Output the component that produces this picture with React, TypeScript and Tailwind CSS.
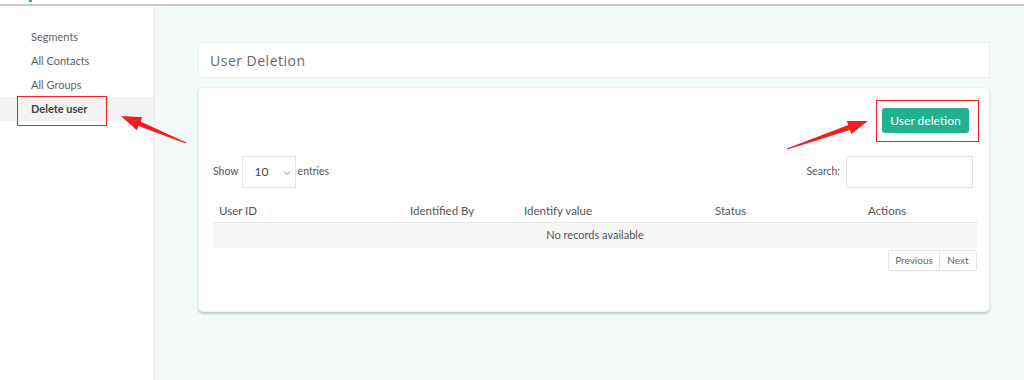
import React from 'react';

const columns = [
  { label: 'User ID', w: 'w-[191px]' },
  { label: 'Identified By', w: 'w-[114px]' },
  { label: 'Identify value', w: 'w-[191px]' },
  { label: 'Status', w: 'w-[153px]' },
  { label: 'Actions', w: 'flex-1' },
];

const sideLinks = ['Segments', 'All Contacts', 'All Groups'];

export default function App() {
  return (
    <div className="relative w-[1024px] h-[380px] overflow-hidden bg-white font-['Lato','Open_Sans',sans-serif] text-[#555]">
      {/* top bar remnant */}
      <div className="relative h-[4px] bg-white">
        <div className="absolute left-[29px] top-0 w-[3px] h-[2px] bg-[#1fb08c]" />
      </div>
      <div className="h-[2px] bg-[#c9c9c9]" />

      <div className="flex h-[374px]">
        {/* sidebar */}
        <aside className="w-[155px] shrink-0 bg-white border-r border-[#e3e8e6] pt-[19px]">
          {sideLinks.map((l) => (
            <div key={l} className="h-[24px] flex items-center pl-[31px] text-[11px] text-[#5f5f5f]">
              {l}
            </div>
          ))}
          <div className="h-[24px] flex items-center pl-[31px] text-[11px] font-bold text-[#444] bg-[#f3f3f3]">
            Delete user
          </div>
        </aside>

        {/* main */}
        <main className="flex-1 bg-[#f3f9f7] pl-[43px] pr-[34px] pt-[36px]">
          <div className="h-[36px] bg-white border border-[#ebeeed] flex items-center pl-[11px]">
            <span className="font-['Open_Sans',sans-serif] text-[14px] tracking-[0.5px] text-[#666]">User Deletion</span>
          </div>

          <div className="mt-[9px] h-[225px] bg-white rounded-[5px] shadow-[0_2px_2px_rgba(0,0,0,0.18)] border border-[#eef0ef] pt-[20px] pl-[14px] pr-[12px]">
            <div className="flex justify-end pr-[8px]">
              <button className="w-[87px] h-[25px] rounded-[3px] bg-[#20b18e] text-white text-[12px]">
                User deletion
              </button>
            </div>

            <div className="mt-[23px] flex items-center justify-between h-[32px]">
              <div className="flex items-center text-[10.5px] text-[#555]">
                <span>Show</span>
                <div className="ml-[3px] w-[54px] h-[32px] border border-[#e3e3e3] flex items-center pl-[12px] pr-[4px] justify-between">
                  <span className="text-[12px] text-[#444]">10</span>
                  <svg width="8" height="6" viewBox="0 0 8 6" className="mt-[1px]">
                    <path d="M1 1.5 L4 4.5 L7 1.5" fill="none" stroke="#888" strokeWidth="1" />
                  </svg>
                </div>
                <span className="ml-[2px]">entries</span>
              </div>
              <div className="flex items-center text-[10.5px] text-[#555] pr-[4px]">
                <span>Search:</span>
                <div className="ml-[6px] w-[127px] h-[32px] border border-[#e3e3e3]" />
              </div>
            </div>

            <div className="mt-[12px]">
              <div className="flex h-[23px] items-center border-b border-[#e6e6e6] text-[11.5px] text-[#555]">
                {columns.map((c) => (
                  <div key={c.label} className={`${c.w} pl-[6px]`}>
                    {c.label}
                  </div>
                ))}
              </div>
              <div className="h-[25px] bg-[#f5f5f5] flex items-center justify-center text-[11px] text-[#555]">
                No records available
              </div>
              <div className="mt-[2px] flex justify-end">
                <div className="flex h-[21px] border border-[#e3e3e3] rounded-[2px] text-[10px] text-[#666]">
                  <div className="w-[51px] flex items-center justify-center border-r border-[#e3e3e3]">Previous</div>
                  <div className="w-[36px] flex items-center justify-center">Next</div>
                </div>
              </div>
            </div>
          </div>
        </main>
      </div>

      {/* annotations */}
      <div className="absolute left-[17px] top-[96px] w-[90px] h-[30px] border-[1.5px] border-[#f02020]" />
      <div className="absolute left-[876px] top-[100px] w-[103px] h-[42px] border-[1.5px] border-[#f02020]" />
      <svg className="absolute left-0 top-0 pointer-events-none" width="1024" height="380">
        <polygon
          fill="#f41c1c"
          points="121,116 142.2,117.2 140.5,121.4 186.2,142.5 185.8,143.5 138.5,126 136.8,130.2"
        />
        <polygon
          fill="#f41c1c"
          points="868,121 851.4,134.1 849.9,129.9 787.2,149.5 786.8,148.5 848.3,125.1 846.8,120.9"
        />
      </svg>
    </div>
  );
}
